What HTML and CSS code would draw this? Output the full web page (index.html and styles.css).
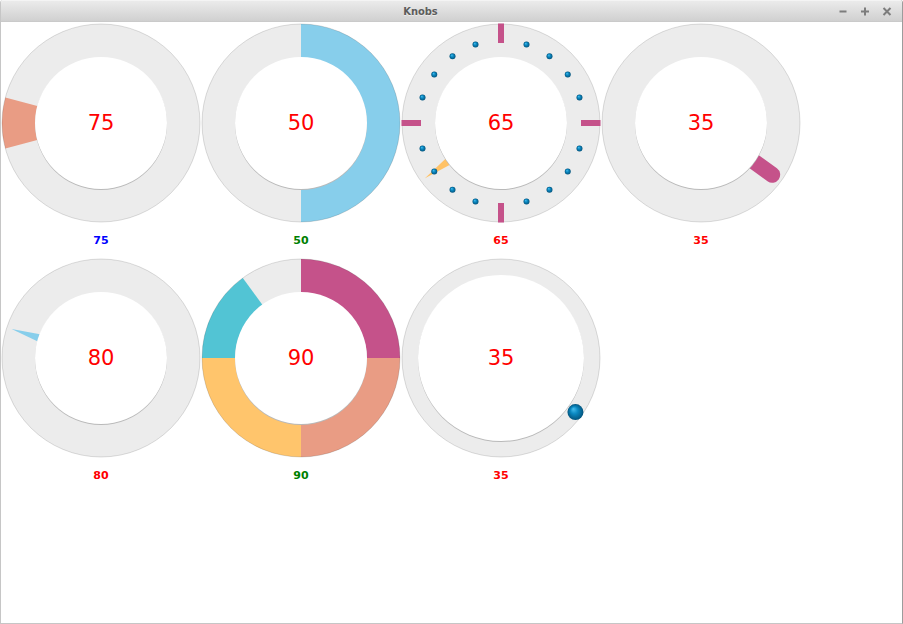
FILE: index.html
```html
<!DOCTYPE html>
<html lang="en">
<head>
<meta charset="utf-8">
<title>Knobs</title>
<link rel="stylesheet" href="styles.css">
</head>
<body>
<svg class="defs" width="0" height="0" aria-hidden="true">
  <defs>
    <radialGradient id="ball" cx="0.5" cy="0.5" r="0.5" fx="0.36" fy="0.3">
      <stop offset="0" stop-color="#49bfee"/>
      <stop offset="0.45" stop-color="#0b89c2"/>
      <stop offset="1" stop-color="#03547d"/>
    </radialGradient>
    <symbol id="base" viewBox="0 0 200 200">
      <circle cx="100" cy="100" r="99" fill="#ececec"/>
    </symbol>
  </defs>
</svg>
<div class="window">
  <header class="titlebar">
    <div class="title">Knobs</div>
    <div class="controls">
      <span class="ctl"><svg width="10" height="10" viewBox="0 0 10 10"><path d="M1.5 5.5h7" /></svg></span>
      <span class="ctl"><svg width="10" height="10" viewBox="0 0 10 10"><path d="M1 5.5h8M5 1.5v8" /></svg></span>
      <span class="ctl"><svg width="10" height="10" viewBox="0 0 10 10"><path d="M1.5 2l7 7M8.5 2l-7 7" /></svg></span>
    </div>
  </header>
  <main class="grid">
    <!-- 1: 75 marker -->
    <div class="cell">
      <div class="knob">
        <svg viewBox="0 0 200 200" width="200" height="200">
          <circle cx="100" cy="100" r="99" class="ring"/>
          <path d="M100 100 L4.37 125.62 A99 99 0 0 1 4.37 74.38 Z" fill="#e99c84"/>
          <circle cx="100" cy="100" r="99" class="edge"/>
          <circle cx="100" cy="101" r="66" class="shadow"/>
          <circle cx="100" cy="100" r="66" fill="#fff"/>
        </svg>
        <span class="value">75</span>
      </div>
      <div class="label blue">75</div>
    </div>
    <!-- 2: 50 fill -->
    <div class="cell">
      <div class="knob">
        <svg viewBox="0 0 200 200" width="200" height="200">
          <circle cx="100" cy="100" r="99" class="ring"/>
          <path d="M100 100 L100 1 A99 99 0 0 1 100 199 Z" fill="#87ceeb"/>
          <circle cx="100" cy="100" r="99" class="edge"/>
          <circle cx="100" cy="101" r="66" class="shadow"/>
          <circle cx="100" cy="100" r="66" fill="#fff"/>
        </svg>
        <span class="value">50</span>
      </div>
      <div class="label green">50</div>
    </div>
    <!-- 3: 65 ticks -->
    <div class="cell">
      <div class="knob">
        <svg viewBox="0 0 200 200" width="200" height="200">
          <circle cx="100" cy="100" r="99" class="ring"/>
          <circle cx="100" cy="100" r="99" class="edge"/>
          <g fill="#c5528a">
            <rect x="97" y="0.5" width="6" height="19.5"/>
            <rect x="97" y="0.5" width="6" height="19.5" transform="rotate(90 100 100)"/>
            <rect x="97" y="0.5" width="6" height="19.5" transform="rotate(180 100 100)"/>
            <rect x="97" y="0.5" width="6" height="19.5" transform="rotate(270 100 100)"/>
          </g>
          <polygon points="100,6 95.5,40 104.5,40" fill="#ffc266" transform="rotate(234 100 100)"/>
          <g fill="url(#ball)">
            <circle cx="125.49" cy="21.53" r="3"/>
            <circle cx="148.49" cy="33.26" r="3"/>
            <circle cx="166.74" cy="51.51" r="3"/>
            <circle cx="178.47" cy="74.51" r="3"/>
            <circle cx="178.47" cy="125.49" r="3"/>
            <circle cx="166.74" cy="148.49" r="3"/>
            <circle cx="148.49" cy="166.74" r="3"/>
            <circle cx="125.49" cy="178.47" r="3"/>
            <circle cx="74.51" cy="178.47" r="3"/>
            <circle cx="51.51" cy="166.74" r="3"/>
            <circle cx="33.26" cy="148.49" r="3"/>
            <circle cx="21.53" cy="125.49" r="3"/>
            <circle cx="21.53" cy="74.51" r="3"/>
            <circle cx="33.26" cy="51.51" r="3"/>
            <circle cx="51.51" cy="33.26" r="3"/>
            <circle cx="74.51" cy="21.53" r="3"/>
          </g>
          <circle cx="100" cy="101" r="66" class="shadow"/>
          <circle cx="100" cy="100" r="66" fill="#fff"/>
        </svg>
        <span class="value">65</span>
      </div>
      <div class="label red">65</div>
    </div>
    <!-- 4: 35 capsule -->
    <div class="cell">
      <div class="knob">
        <svg viewBox="0 0 200 200" width="200" height="200">
          <circle cx="100" cy="100" r="99" class="ring"/>
          <circle cx="100" cy="100" r="99" class="edge"/>
          <line x1="100" y1="60" x2="100" y2="12" stroke="#c5528a" stroke-width="16" stroke-linecap="round" transform="rotate(126 100 100)"/>
          <circle cx="100" cy="101" r="66" class="shadow"/>
          <circle cx="100" cy="100" r="66" fill="#fff"/>
        </svg>
        <span class="value">35</span>
      </div>
      <div class="label red">35</div>
    </div>
    <!-- 5: 80 needle -->
    <div class="cell">
      <div class="knob">
        <svg viewBox="0 0 200 200" width="200" height="200">
          <circle cx="100" cy="100" r="99" class="ring"/>
          <circle cx="100" cy="100" r="99" class="edge"/>
          <polygon points="100,6 95.5,40 104.5,40" fill="#87ceeb" transform="rotate(288 100 100)"/>
          <circle cx="100" cy="101" r="66" class="shadow"/>
          <circle cx="100" cy="100" r="66" fill="#fff"/>
        </svg>
        <span class="value">80</span>
      </div>
      <div class="label red">80</div>
    </div>
    <!-- 6: 90 sectors -->
    <div class="cell">
      <div class="knob">
        <svg viewBox="0 0 200 200" width="200" height="200">
          <circle cx="100" cy="100" r="99" class="ring"/>
          <path d="M100 100 L100 1 A99 99 0 0 1 199 100 Z" fill="#c5528a"/>
          <path d="M100 100 L199 100 A99 99 0 0 1 100 199 Z" fill="#e99c84"/>
          <path d="M100 100 L100 199 A99 99 0 0 1 1 100 Z" fill="#ffc56c"/>
          <path d="M100 100 L1 100 A99 99 0 0 1 41.81 19.91 Z" fill="#52c4d4"/>
          <circle cx="100" cy="100" r="99" class="edge"/>
          <circle cx="100" cy="101" r="66" class="shadow"/>
          <circle cx="100" cy="100" r="66" fill="#fff"/>
        </svg>
        <span class="value">90</span>
      </div>
      <div class="label green">90</div>
    </div>
    <!-- 7: 35 ball -->
    <div class="cell">
      <div class="knob">
        <svg viewBox="0 0 200 200" width="200" height="200">
          <circle cx="100" cy="100" r="99" class="ring"/>
          <circle cx="100" cy="100" r="99" class="edge"/>
          <circle cx="100" cy="101" r="83" class="shadow"/>
          <circle cx="100" cy="100" r="83" fill="#fff"/>
          <circle cx="174.43" cy="154.08" r="8" fill="url(#ball)"/>
        </svg>
        <span class="value">35</span>
      </div>
      <div class="label red">35</div>
    </div>
  </main>
</div>
</body>
</html>
```
FILE: styles.css
```css
* { box-sizing: border-box; }

html, body {
  margin: 0;
  padding: 0;
  background: #fff;
}

.defs {
  position: absolute;
  width: 0;
  height: 0;
  overflow: hidden;
}

.window {
  width: 903px;
  height: 624px;
  display: flex;
  flex-direction: column;
  border-left: 1px solid #c6c6c6;
  border-right: 1px solid #9c9c9c;
  border-bottom: 1px solid #c6c6c6;
  border-radius: 3px 3px 0 0;
  overflow: hidden;
  background: #fff;
}

.titlebar {
  height: 22px;
  flex: none;
  display: flex;
  align-items: center;
  background: linear-gradient(#ebebeb, #d0d0d0);
  border-top: 1px solid #f4f4f4;
  border-bottom: 1px solid #cacaca;
}

.title {
  flex: 1;
  padding-left: 8px;
  text-align: center;
  font-family: "DejaVu Sans Condensed", "DejaVu Sans", sans-serif;
  font-stretch: condensed;
  font-weight: bold;
  font-size: 11px;
  color: #5c5c5c;
  text-shadow: 0 1px 0 rgba(255,255,255,0.5);
}

.controls {
  display: flex;
  padding-right: 4px;
}

.ctl {
  width: 22px;
  height: 20px;
  display: flex;
  align-items: center;
  justify-content: center;
}

.ctl svg path {
  stroke: #7d7d7d;
  stroke-width: 2;
  fill: none;
}

.grid {
  display: grid;
  grid-template-columns: repeat(4, 200px);
  align-content: start;
  padding-top: 1px;
}

.cell {
  display: flex;
  flex-direction: column;
}

.knob {
  width: 200px;
  height: 200px;
  display: grid;
}

.knob > * {
  grid-area: 1 / 1;
}

.knob svg {
  display: block;
}

.ring {
  fill: #ececec;
}

.edge {
  fill: none;
  stroke: rgba(0, 0, 0, 0.13);
  stroke-width: 1;
}

.shadow {
  fill: #b9b9b9;
}

.value {
  place-self: center;
  font-family: "DejaVu Sans", sans-serif;
  font-size: 21px;
  color: #ff0000;
  line-height: 1;
}

.label {
  height: 35px;
  line-height: 35px;
  text-align: center;
  font-family: "DejaVu Sans", sans-serif;
  font-weight: bold;
  font-size: 11px;
}

.blue { color: #0000ff; }
.green { color: #008000; }
.red { color: #ff0000; }
```
